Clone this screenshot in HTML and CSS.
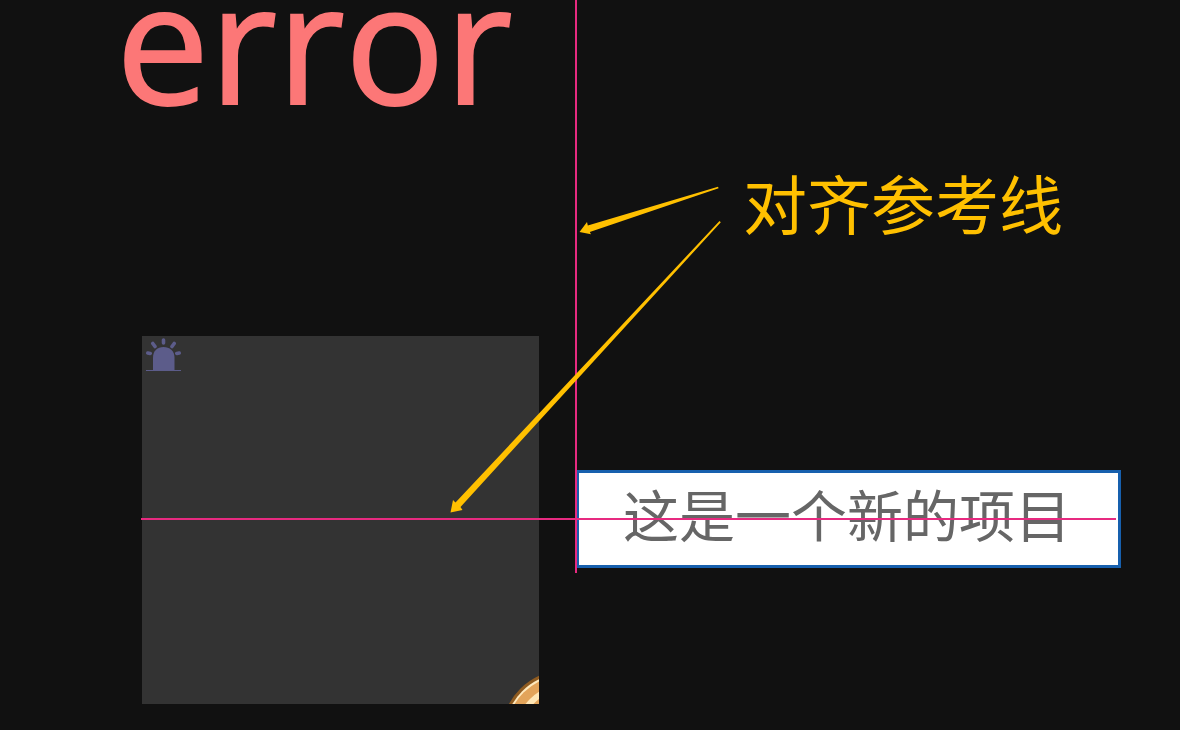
FILE: index.html
```html
<!DOCTYPE html>
<html lang="zh-CN">
<head>
<meta charset="utf-8">
<title>对齐参考线</title>
<link rel="stylesheet" href="styles.css">
</head>
<body>
<main class="canvas">
  <div class="node node-error">error</div>
  <section class="node node-panel">
    <svg class="alarm" viewBox="0 0 38 34" aria-hidden="true">
      <path d="M7 33V20.500C7 14 11.500 10 17.500 10S28.500 14 28.500 20.500V33Z" fill="#5c5c8a"/>
      <path d="M0 33.500H35" stroke="#5c5c8a" stroke-width="1"/>
      <path d="M17.500 3V6M6.800 6.500L9 9.500M28.200 6.500L26 9.500M1.800 16L4.200 16.500M33.200 16L30.800 16.500" fill="none" stroke="#5c5c8a" stroke-width="3.600" stroke-linecap="round"/>
    </svg>
    <svg class="coin" viewBox="0 0 31 29" aria-hidden="true">
      <circle cx="58" cy="60" r="65" fill="#8f5b20"/>
      <circle cx="58" cy="60" r="62" fill="#ffe9bd"/>
      <circle cx="58" cy="60" r="60" fill="#e3a45a"/>
      <circle cx="58" cy="60" r="51" fill="#ffe6b5"/>
      <circle cx="58" cy="60" r="45" fill="#e3a45a"/>
    </svg>
  </section>
  <div class="node node-item">这是一个新的项目</div>
  <div class="guide guide-vertical"></div>
  <div class="guide guide-horizontal"></div>
  <svg class="arrows" viewBox="0 0 274 330" aria-hidden="true">
    <path d="M129.500 47L137 37L137.800 40.500L268 1.800L268.600 3.200L139.800 47L141 49.200Z" fill="#ffc000"/>
    <path d="M0.500 327.500L3 315L5.500 317.500L269.500 36L270.800 37.200L10.500 322L12.500 325Z" fill="#ffc000"/>
  </svg>
  <div class="caption">对齐参考线</div>
</main>
</body>
</html>
```
FILE: styles.css
```css
body {
  margin: 0;
  background: #111;
}

.canvas {
  position: relative;
  min-height: 100vh;
  overflow: hidden;
  background: #111;
  font-family: "Open Sans", "Noto Sans CJK SC", sans-serif;
}

.node,
.guide,
.arrows,
.caption {
  position: absolute;
  white-space: nowrap;
}

.node-error {
  left: 116px;
  top: 0;
  color: #fc7777;
  font-size: 166px;
  line-height: 80px;
  -webkit-text-stroke: 2px #fc7777;
}

.node-panel {
  left: 142px;
  top: 336px;
  width: 397px;
  height: 368px;
  background: #333;
}

.alarm {
  position: absolute;
  left: 4px;
  top: 1px;
  width: 38px;
  height: 34px;
}

.coin {
  position: absolute;
  right: 0;
  bottom: 0;
  width: 31px;
  height: 29px;
}

.node-item {
  left: 576px;
  top: 470px;
  padding: 0 47px 12px 44px;
  border: 3px solid #1760ae;
  background: #fff;
  color: #666;
  font-family: "Noto Sans CJK SC", sans-serif;
  font-size: 56px;
  line-height: 80px;
}

.guide {
  background: #e72a80;
}

.guide-vertical {
  left: 575px;
  top: 0;
  width: 2px;
  height: 573px;
}

.guide-horizontal {
  left: 141px;
  top: 518px;
  width: 975px;
  height: 2px;
}

.arrows {
  left: 450px;
  top: 185px;
  width: 274px;
  height: 330px;
}

.caption {
  left: 743px;
  top: 155px;
  color: #ffc000;
  font-family: "Noto Sans CJK SC", sans-serif;
  font-size: 64px;
  line-height: 92px;
}
```
